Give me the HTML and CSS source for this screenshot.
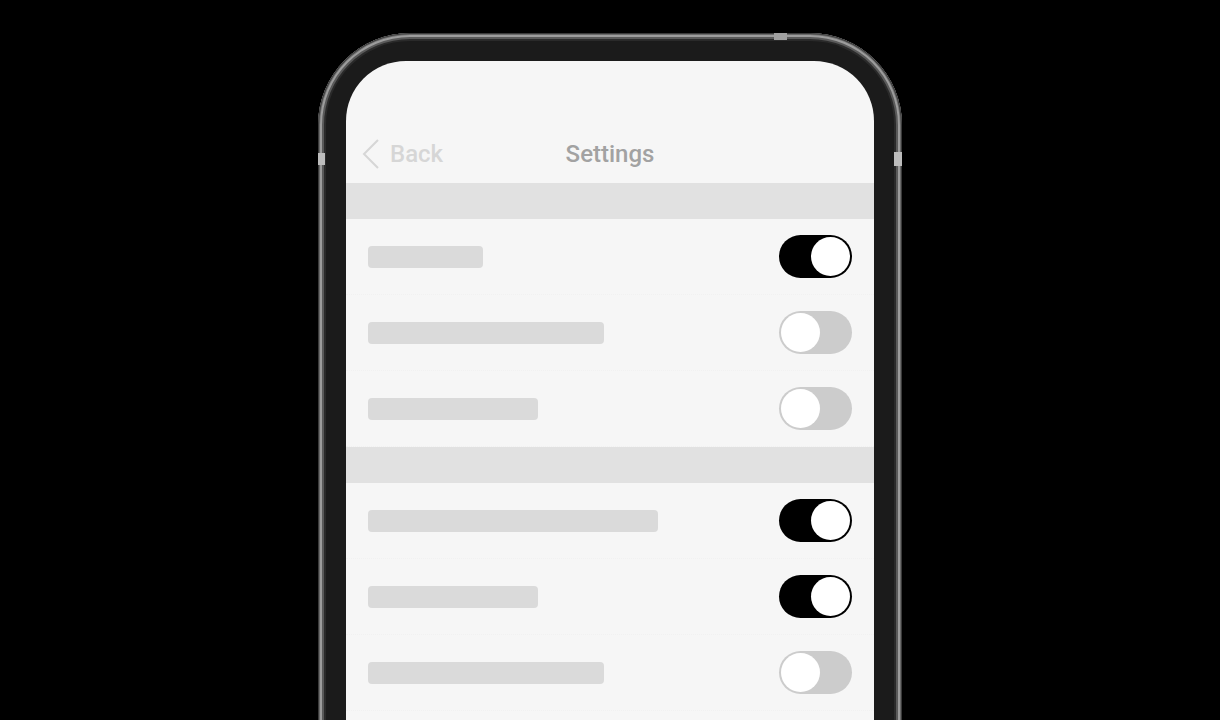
FILE: index.html
```html
<!DOCTYPE html>
<html lang="en">
<head>
<meta charset="utf-8">
<title>Settings</title>
<link rel="stylesheet" href="styles.css">
</head>
<body>
<div class="stage">
  <div class="phone">
    <span class="btn btn-left"></span>
    <span class="btn btn-right"></span>
    <span class="btn btn-top"></span>
    <div class="screen">
      <header class="nav">
        <div class="nav-left">
          <svg class="chev" width="20" height="32" viewBox="0 0 20 32"><path d="M17 2 L3 16 L17 30" fill="none" stroke="#d6d6d6" stroke-width="2"/></svg>
          <span class="back">Back</span>
        </div>
        <div class="title">Settings</div>
        <div class="nav-right"></div>
      </header>
      <div class="band"></div>
      <div class="row"><span class="bar" style="width:115px"></span><span class="toggle on"><span class="knob"></span></span></div>
      <div class="row"><span class="bar" style="width:236px"></span><span class="toggle"><span class="knob"></span></span></div>
      <div class="row"><span class="bar" style="width:170px"></span><span class="toggle"><span class="knob"></span></span></div>
      <div class="band"></div>
      <div class="row"><span class="bar" style="width:290px"></span><span class="toggle on"><span class="knob"></span></span></div>
      <div class="row"><span class="bar" style="width:170px"></span><span class="toggle on"><span class="knob"></span></span></div>
      <div class="row"><span class="bar" style="width:236px"></span><span class="toggle"><span class="knob"></span></span></div>
      <div class="row"><span class="bar" style="width:200px"></span><span class="toggle"><span class="knob"></span></span></div>
    </div>
  </div>
</div>
</body>
</html>
```

FILE: styles.css
```css
html, body {
  margin: 0;
  padding: 0;
  background: #000;
  height: 720px;
  overflow: hidden;
  font-family: Roboto, "Liberation Sans", sans-serif;
}

.stage {
  display: flex;
  justify-content: center;
  padding-top: 33px;
}

.phone {
  position: relative;
  width: 584px;
  height: 1000px;
  box-sizing: border-box;
  padding: 28px;
  border-radius: 92px;
  background: #1b1b1b;
  box-shadow:
    inset 0 0 0 1px #3a3a3a,
    inset 0 0 0 2px #6a6a6a,
    inset 0 0 0 4px #9c9c9c,
    inset 0 0 0 6px #5a5a5a,
    inset 0 0 0 8px #2a2a2a;
}

.btn {
  position: absolute;
  background: #bdbdbd;
}
.btn-left { left: 0; top: 120px; width: 7px; height: 12px; }
.btn-right { right: 0; top: 119px; width: 8px; height: 14px; }
.btn-top { top: 0; left: 456px; width: 13px; height: 7px; background: #a0a0a0; }

.screen {
  height: 100%;
  border-radius: 60px;
  background: #f6f6f6;
  overflow: hidden;
}

.nav {
  height: 122px;
  box-sizing: border-box;
  padding-top: 64px;
  display: grid;
  grid-template-columns: 1fr auto 1fr;
  align-items: center;
}

.nav-left {
  height: 58px;
  display: flex;
  align-items: center;
  padding-left: 15px;
  gap: 9px;
}

.chev { display: block; }

.back {
  font-size: 24px;
  color: #d6d6d6;
  font-weight: 500;
}

.title {
  font-size: 24px;
  color: #a2a2a2;
  font-weight: 500;
  line-height: 58px;
}

.band {
  height: 36px;
  background: #e1e1e1;
}

.row {
  height: 76px;
  box-sizing: border-box;
  padding: 0 22px;
  display: flex;
  align-items: center;
  justify-content: space-between;
  border-bottom: 1px dotted #f1f1f1;
}
.row:last-of-type { border-bottom: none; }

.bar {
  display: block;
  height: 22px;
  border-radius: 4px;
  background: #dadada;
}

.toggle {
  display: flex;
  width: 73px;
  height: 43px;
  box-sizing: border-box;
  padding: 2px;
  border-radius: 22px;
  background: #cccccc;
  justify-content: flex-start;
}
.toggle.on {
  background: #000;
  justify-content: flex-end;
}

.knob {
  display: block;
  width: 39px;
  height: 39px;
  border-radius: 50%;
  background: #fff;
}
```
